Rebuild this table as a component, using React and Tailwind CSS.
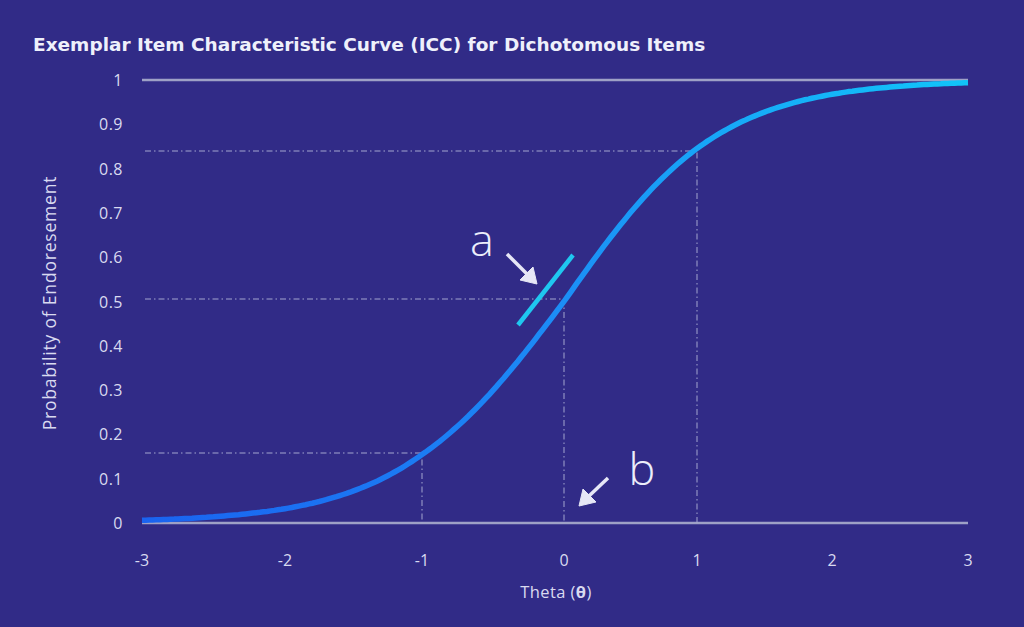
import React from 'react'

const xStops = [
  [-3, 142],
  [-2, 285],
  [-1, 422],
  [0, 564],
  [1, 697],
  [2, 832],
  [3, 968],
]

const xOf = (t) => {
  for (let i = 0; i < xStops.length - 1; i++) {
    const [t0, x0] = xStops[i]
    const [t1, x1] = xStops[i + 1]
    if (t <= t1) return x0 + ((t - t0) / (t1 - t0)) * (x1 - x0)
  }
  return 968
}
const yOf = (p) => 523 - p * 443

const curvePath = () => {
  const pts = []
  for (let i = 0; i <= 240; i++) {
    const t = -3 + i * 0.025
    const p = 1 / (1 + Math.exp(-1.7 * t))
    pts.push(`${i === 0 ? 'M' : 'L'}${xOf(t).toFixed(1)},${yOf(p).toFixed(1)}`)
  }
  return pts.join(' ')
}

const yTicks = ['1', '0.9', '0.8', '0.7', '0.6', '0.5', '0.4', '0.3', '0.2', '0.1', '0']
const dash = '6 3 1.5 3'

const App = () => {
  return (
    <div className="w-[1024px] h-[627px] bg-[#312b87] flex flex-col overflow-hidden">
      <h2 className="h-[62px] pl-[33px] pt-[35px] text-[18.5px] leading-5 font-bold text-[#eef0fb] font-['DejaVu_Sans',sans-serif]">
        Exemplar Item Characteristic Curve (ICC) for Dichotomous Items
      </h2>

      <svg
        viewBox="0 62 1024 565"
        className="w-[1024px] h-[565px] font-['Open_Sans','DejaVu_Sans',sans-serif]"
      >
        <defs>
          <linearGradient id="icc" gradientUnits="userSpaceOnUse" x1="142" y1="523" x2="968" y2="80">
            <stop offset="0" stopColor="#1a63f0" />
            <stop offset="0.5" stopColor="#1c8df6" />
            <stop offset="1" stopColor="#11c4f9" />
          </linearGradient>
        </defs>

        {/* axis lines */}
        <line x1="142" y1="80" x2="968" y2="80" stroke="#9ea1c6" strokeWidth="2.5" />
        <line x1="142" y1="523" x2="968" y2="523" stroke="#9ea1c6" strokeWidth="2.5" />

        {/* reference lines */}
        <g stroke="#a4a6cf" strokeWidth="1" strokeDasharray={dash} fill="none">
          <path d="M145,151 H697 V523" />
          <path d="M145,299 H564 V523" />
          <path d="M145,453 H422 V523" />
        </g>

        {/* curve */}
        <path d={curvePath()} fill="none" stroke="url(#icc)" strokeWidth="5.5" strokeLinecap="butt" />

        {/* slope marker */}
        <line x1="518" y1="325" x2="573" y2="255" stroke="#1fc7f0" strokeWidth="4.5" />

        {/* arrows */}
        <g stroke="#e6e7f6" fill="#e6e7f6">
          <line x1="507" y1="254" x2="527" y2="274" strokeWidth="3.5" />
          <polygon points="537,284 520,280 533,267" strokeWidth="1" />
          <line x1="608" y1="478" x2="589" y2="496" strokeWidth="3.5" />
          <polygon points="579,506 583,489 596,502" strokeWidth="1" />
        </g>

        <g fill="#eceefb" fontSize="45" fontWeight="300">
          <text x="482" y="256" textAnchor="middle">a</text>
          <text x="642" y="485" textAnchor="middle">b</text>
        </g>

        {/* y tick labels */}
        <g fill="#d9daf0" fontSize="16" textAnchor="end" letterSpacing="0.5">
          {yTicks.map((t, i) => (
            <text key={t} x="123" y={80 + i * 44.3 + 6}>
              {t}
            </text>
          ))}
        </g>

        {/* x tick labels */}
        <g fill="#d9daf0" fontSize="16" textAnchor="middle">
          {xStops.map(([t, x]) => (
            <text key={t} x={x} y="566">
              {t}
            </text>
          ))}
        </g>

        <text x="556" y="598" textAnchor="middle" fill="#d9daf0" fontSize="16.5" letterSpacing="0.4">
          Theta (<tspan fontWeight="700">θ</tspan>)
        </text>

        <text
          transform="translate(56,303) rotate(-90)"
          textAnchor="middle"
          fill="#d9daf0"
          fontSize="17.5"
          letterSpacing="0.8"
        >
          Probability of Endoresement
        </text>
      </svg>
    </div>
  )
}

export default App
